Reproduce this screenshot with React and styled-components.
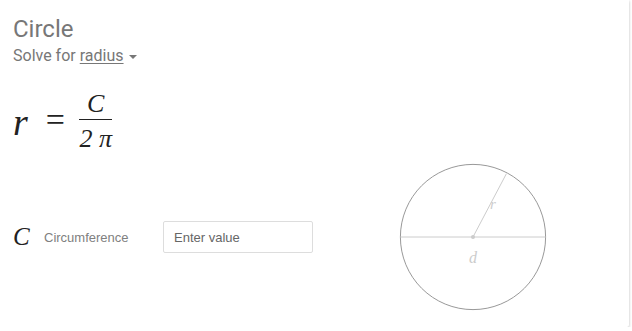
import React from "react";
import styled, { createGlobalStyle } from "styled-components";

const Global = createGlobalStyle`
  html, body { margin: 0; padding: 0; background: #fff; }
  body { font-family: Roboto, "Liberation Sans", Arial, sans-serif; }
`;

const Card = styled.div`
  width: 629px;
  height: 327px;
  box-sizing: border-box;
  background: #fff;
  border-radius: 0 0 2px 0;
  box-shadow: 0 1px 3px rgba(0, 0, 0, 0.28);
  padding: 15px 0 0 13px;
  display: flex;
  flex-direction: column;
`;

const Title = styled.div`
  font-size: 24px;
  line-height: 28px;
  color: #777;
`;

const Solve = styled.div`
  margin-top: 3px;
  font-size: 16px;
  line-height: 20px;
  color: #777;
  display: flex;
  align-items: center;
`;

const Unit = styled.span`
  margin-left: 4px;
  text-decoration: underline;
  text-underline-offset: 2px;
`;

const Caret = styled.span`
  margin-left: 5px;
  margin-top: 1px;
  width: 0;
  height: 0;
  border-left: 4px solid transparent;
  border-right: 4px solid transparent;
  border-top: 4px solid #777;
`;

const Equation = styled.div`
  margin-top: 20px;
  display: flex;
  align-items: center;
  font-family: "Liberation Serif", "Times New Roman", serif;
  color: #222;
  height: 70px;
`;

const Symbol = styled.span`
  font-size: ${(p) => p.size || 36}px;
  font-style: ${(p) => (p.italic ? "italic" : "normal")};
  line-height: 1;
  margin-top: 1px;
`;

const Equals = styled.span`
  font-size: 34px;
  line-height: 1;
  margin: -2px 14px 0 18px;
`;

const Fraction = styled.span`
  display: inline-flex;
  flex-direction: column;
  align-items: center;
  font-size: 26px;
  font-style: italic;
  line-height: 28px;
`;

const Numer = styled.span`
  padding: 0 8px 1px;
  border-bottom: 1px solid #222;
  align-self: stretch;
  text-align: center;
`;

const Denom = styled.span`
  padding-top: 5px;
`;

const Row = styled.div`
  margin-top: 6px;
  display: flex;
  align-items: center;
`;

const VarSymbol = styled.span`
  width: 31px;
  font-family: "Liberation Serif", "Times New Roman", serif;
  font-style: italic;
  font-size: 25px;
  color: #222;
`;

const Label = styled.span`
  width: 119px;
  font-family: Arial, "Liberation Sans", sans-serif;
  font-size: 13px;
  color: #808080;
`;

const Input = styled.input`
  width: 150px;
  height: 32px;
  box-sizing: border-box;
  border: 1px solid #ddd;
  border-radius: 2px;
  padding: 0 10px;
  font-family: Arial, "Liberation Sans", sans-serif;
  font-size: 13px;
  color: #222;
  outline: none;
  &::placeholder { color: #666; }
`;

const Diagram = styled.svg`
  margin-left: 85px;
  display: block;
`;

function CircleDiagram() {
  const cx = 75;
  const cy = 75;
  return (
    <Diagram width="150" height="150" viewBox="0 0 150 150">
      <circle cx={cx} cy={cy} r="72.6" fill="none" stroke="#999" strokeWidth="1" />
      <line x1="2.4" y1={cy} x2="147.6" y2={cy} stroke="#ccc" strokeWidth="1" />
      <line x1={cx} y1={cy} x2={cx + 33.4} y2={cy - 63.3} stroke="#ccc" strokeWidth="1" />
      <circle cx={cx} cy={cy} r="2" fill="#ccc" />
      <text x={cx + 17} y={cy - 28} fontFamily="'Liberation Serif', serif" fontStyle="italic" fontSize="15" fill="#ccc">r</text>
      <text x={cx} y={cy + 26} textAnchor="middle" fontFamily="'Liberation Serif', serif" fontStyle="italic" fontSize="16" fill="#ccc">d</text>
    </Diagram>
  );
}

export default function App() {
  return (
    <>
      <Global />
      <Card>
        <Title>Circle</Title>
        <Solve>
          Solve for<Unit>radius</Unit>
          <Caret />
        </Solve>
        <Equation>
          <Symbol italic size={38}>r</Symbol>
          <Equals>=</Equals>
          <Fraction>
            <Numer>C</Numer>
            <Denom>2 π</Denom>
          </Fraction>
        </Equation>
        <Row>
          <VarSymbol>C</VarSymbol>
          <Label>Circumference</Label>
          <Input placeholder="Enter value" />
          <CircleDiagram />
        </Row>
      </Card>
    </>
  );
}
